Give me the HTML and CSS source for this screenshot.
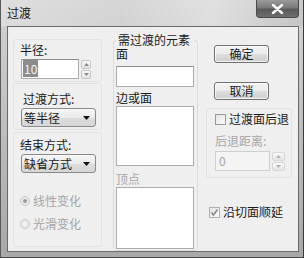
FILE: index.html
```html
<!DOCTYPE html>
<html lang="zh">
<head>
<meta charset="utf-8">
<link rel="stylesheet" href="styles.css">
</head>
<body>
<div class="window">
  <div class="titlebar">
    <span class="title">过渡</span>
    <div class="close"><svg width="13" height="10" viewBox="0 0 13 10"><path d="M2 1 L11 9 M11 1 L2 9" stroke="#fff" stroke-width="2.4" stroke-linecap="round"/></svg></div>
  </div>
  <div class="client">
    <div class="col left">
      <div class="group g1">
        <div class="lbl">半径:</div>
        <div class="spinrow">
          <div class="edit e1"><span class="sel">10</span></div>
          <div class="spin">
            <div class="sb"><svg width="5" height="3" viewBox="0 0 5 3"><path d="M0 3 L2.5 0 L5 3Z" fill="#8a8a8a"/></svg></div>
            <div class="sb"><svg width="5" height="3" viewBox="0 0 5 3"><path d="M0 0 L2.5 3 L5 0Z" fill="#8a8a8a"/></svg></div>
          </div>
        </div>
      </div>
      <div class="group g2">
        <div class="lbl lbl2">过渡方式:</div>
        <div class="combo c1"><span>等半径</span><svg width="7" height="4" viewBox="0 0 7 4"><path d="M0 0 L7 0 L3.5 4Z" fill="#111"/></svg></div>
      </div>
      <div class="group g3">
        <div class="lbl">结束方式:</div>
        <div class="combo c2"><span>缺省方式</span><svg width="7" height="4" viewBox="0 0 7 4"><path d="M0 0 L7 0 L3.5 4Z" fill="#111"/></svg></div>
        <div class="radio r1"><span class="circle"><span class="dot"></span></span><span>线性变化</span></div>
        <div class="radio r2"><span class="circle"></span><span>光滑变化</span></div>
      </div>
    </div>
    <div class="col mid">
      <div class="mlabel">需过渡的元素面</div>
      <div class="edit e2"></div>
      <div class="sublbl">边或面</div>
      <div class="list l1"></div>
      <div class="sublbl dis">顶点</div>
      <div class="list l2"></div>
    </div>
    <div class="col right">
      <div class="btn b1">确定</div>
      <div class="btn b2">取消</div>
      <div class="rgroup">
        <div class="check"><span class="box"></span><span>过渡面后退</span></div>
        <div class="lbl dis dlbl">后退距离:</div>
        <div class="spinrow">
          <div class="edit e3"><span>0</span></div>
          <div class="spin spin2">
            <div class="sb"><svg width="5" height="3" viewBox="0 0 5 3"><path d="M0 3 L2.5 0 L5 3Z" fill="#b0b0b0"/></svg></div>
            <div class="sb"><svg width="5" height="3" viewBox="0 0 5 3"><path d="M0 0 L2.5 3 L5 0Z" fill="#b0b0b0"/></svg></div>
          </div>
        </div>
      </div>
      <div class="check c-slide"><span class="box checked"><svg width="9" height="9" viewBox="0 0 9 9"><path d="M1.5 4.5 L3.5 7 L7.5 1.5" stroke="#8a8a8a" stroke-width="1.6" fill="none"/></svg></span><span>沿切面顺延</span></div>
    </div>
  </div>
</div>
</body>
</html>
```

FILE: styles.css
```css
* { box-sizing: border-box; }
html, body { margin: 0; padding: 0; }
body {
  font-family: "Noto Sans CJK SC", "Noto Sans", sans-serif;
  font-size: 12px;
  line-height: 14px;
  color: #1a1a1a;
  background: #707070;
}
.window {
  width: 304px;
  height: 258px;
  background: linear-gradient(to bottom, #d4d4d4 0%, #c2c2c2 40%, #a8a8a8 100%);
  border-left: 1px solid #5a5a5a;
  border-right: 1px solid #3a3a3a;
  border-bottom: 1px solid #4a4a4a;
  display: flex;
  flex-direction: column;
}
.titlebar {
  height: 26px;
  display: flex;
  align-items: flex-start;
  background: linear-gradient(to right, rgba(255,255,255,0.25), rgba(255,255,255,0.05) 40%, rgba(255,255,255,0.3) 70%, rgba(0,0,0,0.05));
}
.title {
  padding: 6px 0 0 6px;
  color: #202020;
}
.close {
  margin-left: auto;
  margin-right: 4px;
  width: 43px;
  height: 18px;
  border: 1px solid #4a4a4a;
  border-top: none;
  border-radius: 0 0 4px 4px;
  background: linear-gradient(to bottom, #9a9a9a 0%, #7a7a7a 45%, #5a5a5a 55%, #6e6e6e 100%);
  display: flex;
  align-items: center;
  justify-content: center;
}
.client {
  margin-left: 6px;
  width: 292px;
  height: 226px;
  border: 1px solid #6a6a6a;
  background: #efefef;
  display: flex;
  align-items: flex-start;
  padding-left: 5px;
}
.col { display: flex; flex-direction: column; }
.left { width: 89px; margin-top: 12px; }
.group {
  border: 1px solid #e2e2e2;
  border-radius: 3px;
}
.g1 { height: 43px; padding: 3px 0 0 6px; }
.g2 { height: 47px; margin-top: 1px; padding: 8px 0 0 6px; }
.g3 { height: 115px; margin-top: 2px; padding: 5px 0 0 6px; }
.lbl { height: 14px; }
.lbl2 { padding-left: 3px; }
.spinrow { display: flex; margin-top: 2px; padding-left: 1px; }
.edit {
  background: #fff;
  border: 1px solid #ababab;
  border-top-color: #8e8e8e;
}
.e1 { width: 58px; height: 20px; padding: 2px 0 0 1px; }
.sel { background: #8c8c8c; color: #f4f4f4; padding: 0 1px; }
.spin { margin-left: 2px; margin-top: 1px; display: flex; flex-direction: column; gap: 1px; }
.sb {
  width: 10px;
  height: 9px;
  border: 1px solid #c4c4c4;
  border-radius: 2px;
  background: linear-gradient(#fafafa, #e4e4e4);
  display: flex;
  align-items: center;
  justify-content: center;
}
.combo {
  display: flex;
  align-items: center;
  justify-content: space-between;
  width: 75px;
  height: 19px;
  margin-left: 1px;
  padding: 0 5px 0 2px;
  border: 1px solid #8a8a8a;
  border-radius: 3px;
  background: linear-gradient(#f6f6f6 0%, #ebebeb 50%, #dcdcdc 51%, #d6d6d6 100%);
}
.c1 { margin-top: 2px; }
.c2 { margin-top: 2px; }
.radio {
  display: flex;
  align-items: center;
  gap: 3px;
  color: #a6a6a6;
  margin-left: 0;
}
.r1 { margin-top: 21px; }
.r2 { margin-top: 9px; }
.circle {
  width: 10px;
  height: 10px;
  border-radius: 50%;
  border: 1px solid #c8c8c8;
  background: radial-gradient(#f6f6f6, #e0e0e0);
  display: flex;
  align-items: center;
  justify-content: center;
}
.dot { width: 4px; height: 4px; border-radius: 50%; background: #9a9a9a; }
.mid {
  width: 85px;
  height: 211px;
  margin-left: 11px;
  margin-top: 13px;
  border: 1px solid #dcdcdc;
  border-radius: 3px;
  padding-left: 2px;
}
.mlabel {
  margin-top: -8px;
  width: 78px;
  text-indent: 2px;
  background: #efefef;
  line-height: 14px;
}
.e2 { width: 78px; height: 21px; margin-top: 5px; }
.sublbl { margin-top: 4px; height: 14px; }
.sublbl.dis { margin-top: 6px; }
.dis { color: #a8a8a8; }
.list { width: 78px; background: #fff; border: 1px solid #acacac; margin-top: 1px; }
.l1 { height: 60px; }
.l2 { height: 62px; }
.right { width: 86px; margin-left: 8px; }
.btn {
  width: 55px;
  height: 18px;
  margin-left: 8px;
  border: 1px solid #707070;
  border-radius: 3px;
  background: linear-gradient(#f4f4f4 0%, #ebebeb 50%, #dddddd 51%, #cfcfcf 100%);
  box-shadow: inset 0 0 0 1px rgba(255,255,255,0.7);
  display: flex;
  align-items: center;
  justify-content: center;
  line-height: 14px;
}
.b1 { margin-top: 18px; }
.b2 { margin-top: 19px; }
.rgroup {
  margin-top: 8px;
  height: 70px;
  border: 1px solid #e2e2e2;
  border-radius: 3px;
  padding: 3px 0 0 8px;
}
.check { display: flex; align-items: center; gap: 3px; }
.box {
  width: 11px;
  height: 11px;
  border: 1px solid #9a9a9a;
  background: linear-gradient(135deg, #e4e4e4, #fbfbfb);
  display: flex;
  align-items: center;
  justify-content: center;
}
.box.checked { border-color: #b0b0b0; }
.dlbl { margin-top: 8px; }
.rgroup .spinrow { padding-left: 0; margin-top: 3px; }
.e3 {
  width: 55px;
  height: 20px;
  border-color: #cfcfcf;
  color: #a8a8a8;
  padding: 2px 0 0 3px;
  background: #f4f4f4;
}
.spin2 .sb { width: 13px; border-color: #d6d6d6; }
.c-slide { margin-top: 27px; margin-left: 3px; }
```
